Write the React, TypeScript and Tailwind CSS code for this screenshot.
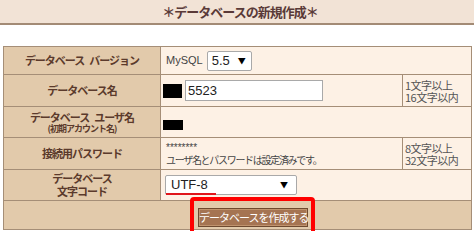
import React from 'react';

const jp = { fontFamily: '"Noto Sans CJK JP", "Liberation Sans", sans-serif' };
const latin = { fontFamily: '"Liberation Sans", sans-serif' };

const Label: React.FC<{ children: React.ReactNode }> = ({ children }) => (
  <td className="w-[157px] border border-[#a58e77] bg-[#e2caab] text-center align-middle text-[11px] font-bold leading-[13px] tracking-[-1px] text-[#5b3a2c]">
    {children}
  </td>
);

const Hint: React.FC<{ a: string; b: string }> = ({ a, b }) => (
  <td className="w-[69px] border border-[#a58e77] bg-[#fdf1e5] pl-[2px] align-middle text-[11px] leading-[12px] tracking-[-0.5px] text-[#555]">
    <div>{a}</div>
    <div>{b}</div>
  </td>
);

const Gap: React.FC = () => <span className="inline-block w-[5px]" />;

export default function App() {
  return (
    <div className="h-[231px] w-[474px] overflow-hidden bg-white" style={jp}>
      <div className="flex h-[25px] items-center justify-center border-b-2 border-[#a38b76] bg-[#f2e3d6]">
        <span className="pl-[6px] text-[13px] font-bold tracking-[-1px] text-[#5a3a38]">＊データベースの新規作成＊</span>
      </div>

      <div className="relative ml-[3px] mt-[21px] w-[469px]">
        <table className="w-[469px] border-collapse border border-[#a58e77]">
          <tbody>
            <tr className="h-[28px]">
              <Label>
                データベース<Gap />バージョン
              </Label>
              <td colSpan={2} className="border border-[#a58e77] bg-[#fdf1e5] pl-[5px] align-middle">
                <div className="flex items-center gap-[4px]">
                  <span className="text-[11px] text-[#444]" style={latin}>MySQL</span>
                  <div className="flex h-[20px] w-[45px] items-center justify-between rounded-[2px] border border-[#a9a9a9] bg-white pl-[4px] pr-[5px]">
                    <span className="text-[13px] text-[#222]" style={latin}>5.5</span>
                    <span className="text-[8px] text-black">▼</span>
                  </div>
                </div>
              </td>
            </tr>

            <tr className="h-[32px]">
              <Label>データベース名</Label>
              <td className="border border-[#a58e77] bg-[#fdf1e5] pl-[2px] align-middle">
                <div className="flex items-center gap-[3px]">
                  <span className="inline-block h-[14px] w-[19px] bg-black" />
                  <div className="flex h-[21px] w-[138px] items-center border border-[#a9a9a9] bg-white pl-[2px] text-[13px] text-[#222]" style={latin}>
                    5523
                  </div>
                </div>
              </td>
              <Hint a="1文字以上" b="16文字以内" />
            </tr>

            <tr className="h-[31px]">
              <Label>
                <div>
                  データベース<Gap />ユーザ名
                </div>
                <div className="text-[9px] leading-[10px] tracking-[-1px]">(初期アカウント名)</div>
              </Label>
              <td colSpan={2} className="border border-[#a58e77] bg-[#fdf1e5] pl-[2px] align-middle">
                <span className="inline-block h-[10px] w-[20px] bg-black align-middle" />
              </td>
            </tr>

            <tr className="h-[32px]">
              <Label>接続用パスワード</Label>
              <td className="border border-[#a58e77] bg-[#fdf1e5] pl-[5px] align-middle text-[#444]">
                <div className="text-[10px] leading-[11px]" style={latin}>********</div>
                <div className="text-[10px] leading-[13px] tracking-[-1.3px]">ユーザ名とパスワードは設定済みです。</div>
              </td>
              <Hint a="8文字以上" b="32文字以内" />
            </tr>

            <tr className="h-[31px]">
              <Label>
                <div>データベース</div>
                <div>文字コード</div>
              </Label>
              <td colSpan={2} className="border border-[#a58e77] bg-[#fdf1e5] pl-[4px] align-middle">
                <div className="relative flex h-[20px] w-[132px] items-center justify-between rounded-[2px] border border-[#a9a9a9] bg-white pl-[5px] pr-[8px]">
                  <span className="text-[13px] text-[#222]" style={latin}>UTF-8</span>
                  <span className="text-[8px] text-black">▼</span>
                  <span className="absolute bottom-[-1px] left-[0px] h-[2px] w-[50px] bg-[#e0161c]" />
                </div>
              </td>
            </tr>

            <tr className="h-[29px]">
              <td colSpan={3} className="border border-[#a58e77] bg-[#e2caab] pl-[194px] pt-[2px] align-top">
                <button className="h-[19px] w-[110px] whitespace-nowrap border border-[#6e4a30] bg-[#a57452] px-0 text-[11px] leading-[17px] tracking-[-1px] text-white shadow-[inset_0_0_0_1px_#c0946f]">
                  データベースを作成する
                </button>
              </td>
            </tr>
          </tbody>
        </table>
        <div className="pointer-events-none absolute left-[187px] top-[151px] h-[40px] w-[125px] rounded-[4px] border-[4px] border-[#ff0000]" />
      </div>
    </div>
  );
}
